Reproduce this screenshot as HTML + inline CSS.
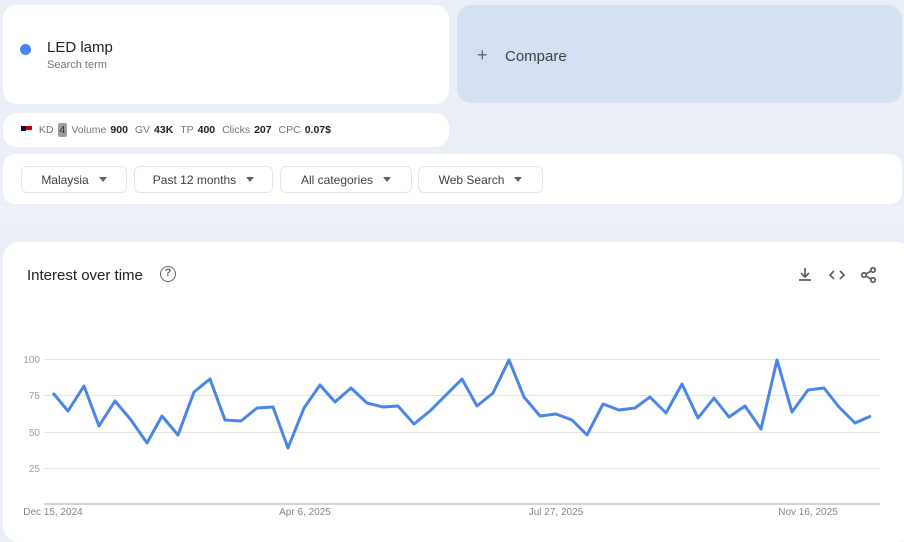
<!DOCTYPE html>
<html><head><meta charset="utf-8"><style>
*{margin:0;padding:0;box-sizing:border-box}
body{width:904px;height:530px;background:#e9eef7;font-family:"Liberation Sans",sans-serif;position:relative;overflow:hidden;color:#202124}
.card{position:absolute;background:#fff;border-radius:14px}
.btn{position:absolute;top:166px;height:27px;border:1px solid #e3e5e8;border-radius:6px;font-size:12px;color:#3c4043;display:flex;align-items:center;justify-content:center;gap:10px;background:#fff}
.tri{width:0;height:0;border-left:4px solid transparent;border-right:4px solid transparent;border-top:5px solid #5f6368}
.m{color:#70757a}.b{font-weight:bold;color:#202124}
</style></head><body>
<div class="card" style="left:3px;top:5px;width:446px;height:99px">
 <div style="position:absolute;left:17px;top:39px;width:11px;height:11px;border-radius:50%;background:#4285f4"></div>
 <div style="position:absolute;left:44px;top:34px;font-size:15px">LED lamp</div>
 <div style="position:absolute;left:44px;top:54px;font-size:11px;color:#70757a">Search term</div>
</div>
<div class="card" style="left:457px;top:5px;width:445px;height:98px;background:#d3e0f4">
 <div style="position:absolute;left:20px;top:40px;font-size:18px;color:#5f6368;font-weight:300">+</div>
 <div style="position:absolute;left:48px;top:43px;font-size:15px;color:#3c4043">Compare</div>
</div>
<div class="card" style="left:3px;top:113px;width:446px;height:34px;font-size:10.5px;display:flex;align-items:center;padding-left:18px;gap:4px;white-space:nowrap">
 <span style="display:inline-block;width:11px;height:8px;background:linear-gradient(#c00 0 50%,#fff 50%);position:relative"><span style="position:absolute;left:0;top:0;width:5px;height:5px;background:#013"></span></span>
 <span class="m">&nbsp;KD</span><span style="background:#9e9e9e;color:#333;padding:1px 2px;border-radius:2px">4</span>
 <span class="m">Volume</span><span class="b">900</span>
 <span class="m">&nbsp;GV</span><span class="b">43K</span>
 <span class="m">&nbsp;TP</span><span class="b">400</span>
 <span class="m">&nbsp;Clicks</span><span class="b">207</span>
 <span class="m">&nbsp;CPC</span><span class="b">0.07$</span>
</div>
<div class="card" style="left:3px;top:154px;width:899px;height:50px;border-radius:12px"></div>
<div style="position:absolute;left:0;top:205px;width:904px;height:18px;background:#edf1f8"></div>
<div class="btn" style="left:21px;width:106px">Malaysia<span class="tri"></span></div>
<div class="btn" style="left:134px;width:139px">Past 12 months<span class="tri"></span></div>
<div class="btn" style="left:280px;width:132px">All categories<span class="tri"></span></div>
<div class="btn" style="left:418px;width:125px">Web Search<span class="tri"></span></div>
<div class="card" style="left:3px;top:242px;width:910px;height:300px;border-radius:16px">
 <div style="position:absolute;left:24px;top:25px;font-size:15px">Interest over time</div>
 <div style="position:absolute;left:157px;top:24px;width:16px;height:16px;border:1.6px solid #5f6368;border-radius:50%;font-size:11px;font-weight:bold;color:#5f6368;text-align:center;line-height:13px">?</div>
</div>
<svg style="position:absolute;left:0;top:0" width="904" height="530">
 <g stroke="#5f6368" stroke-width="1.8" fill="none">
  <path d="M805 268v9M801 273l4 4 4-4M799 280h12"/>
  <path d="M834 271l-4 4 4 4M840 271l4 4-4 4"/>
  <circle cx="873" cy="270" r="2.2"/><circle cx="873" cy="280" r="2.2"/><circle cx="864" cy="275" r="2.2"/>
  <path d="M866 274l5-3M866 276l5 3"/>
 </g>
 <g stroke="#e3e3e3" stroke-width="1"><line x1="44" y1="359.5" x2="880" y2="359.5"/><line x1="44" y1="395.5" x2="880" y2="395.5"/><line x1="44" y1="432.5" x2="880" y2="432.5"/><line x1="44" y1="468.5" x2="880" y2="468.5"/></g>
 <line x1="44" y1="504" x2="880" y2="504" stroke="#c4c4c4" stroke-width="1.5"/>
 <g font-size="10" fill="#9aa0a6" font-family="Liberation Sans,sans-serif" text-anchor="end"><text x="40" y="363">100</text><text x="40" y="399">75</text><text x="40" y="436">50</text><text x="40" y="472">25</text></g>
 <g font-size="10" fill="#80868b" font-family="Liberation Sans,sans-serif" text-anchor="middle"><text x="53" y="515">Dec 15, 2024</text><text x="305" y="515">Apr 6, 2025</text><text x="556" y="515">Jul 27, 2025</text><text x="808" y="515">Nov 16, 2025</text></g>
 <polyline fill="none" stroke="#4a86e8" stroke-width="3" stroke-linejoin="round" points="53,393 68,411 84,386 99,426 115,401 131,420 147,443 162,416 178,435 194,392 210,379 225,420 241,421 257,408 273,407 288,448 304,408 320,385 335,402 351,388 367,403 383,407 398,406 414,424 430,411 446,395 462,379 477,406 493,393 509,360 524,397 540,416 556,414 572,420 587,435 603,404 619,410 635,408 650,397 666,413 682,384 698,418 714,398 729,417 745,406 761,429 777,360 792,412 808,390 824,388 839,407 855,423 871,416"/>
</svg>
</body></html>
